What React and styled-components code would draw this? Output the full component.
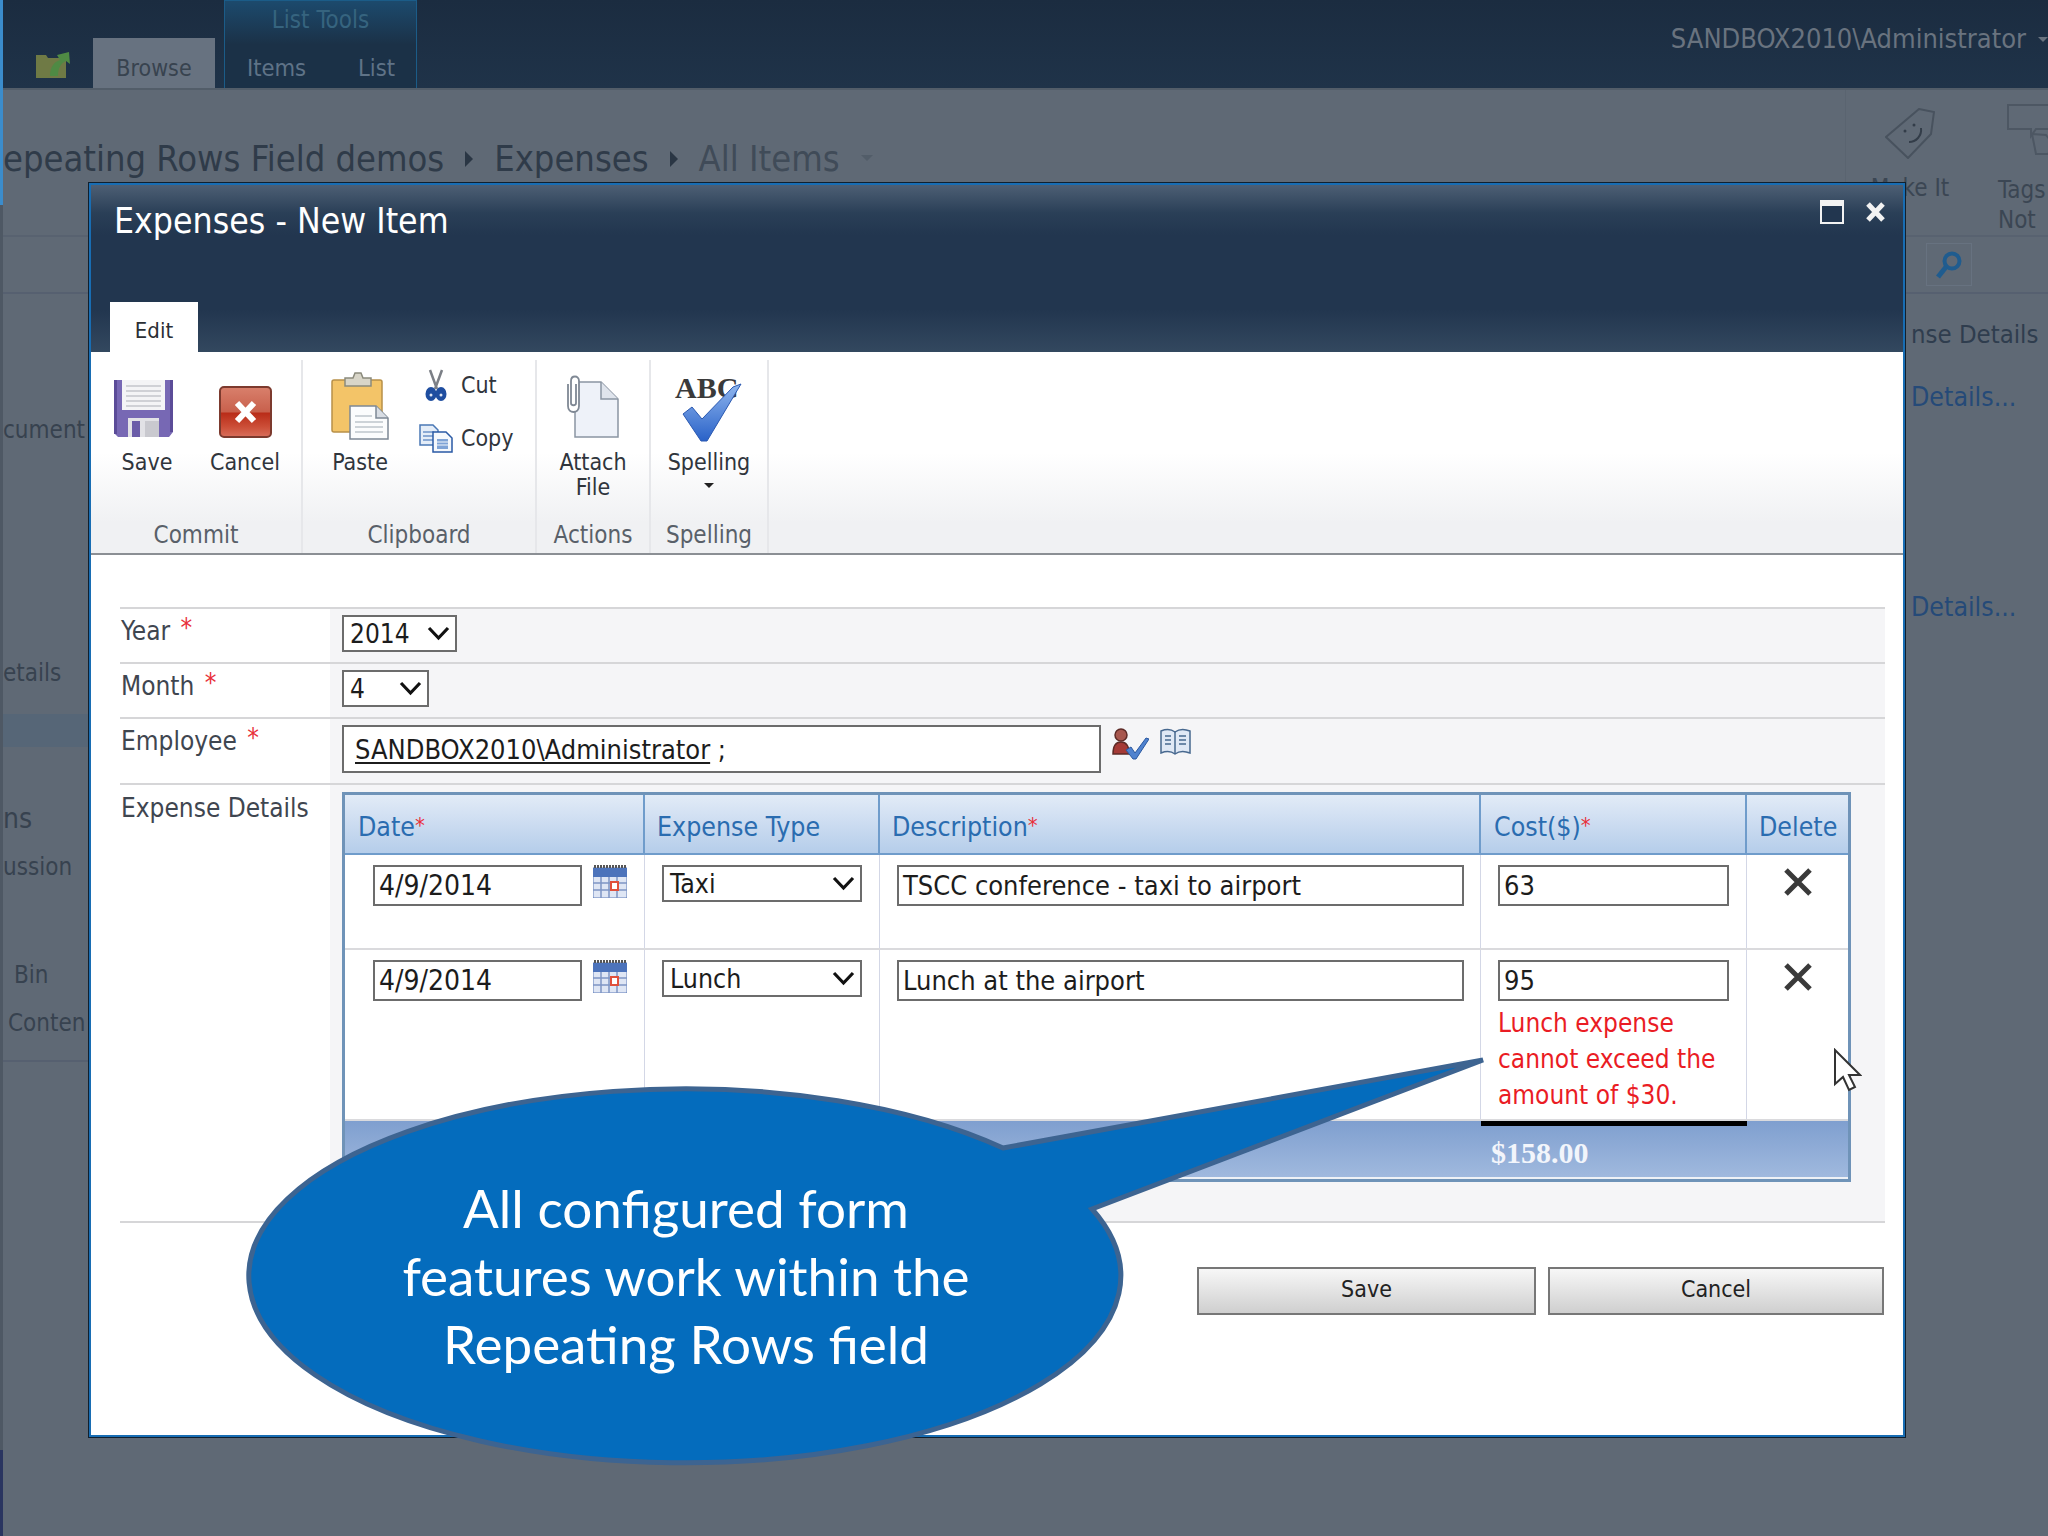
import React from 'react';
import styled, { createGlobalStyle } from 'styled-components';

const uiFont = '"DejaVu Sans Condensed", "DejaVu Sans", sans-serif';

const GlobalStyle = createGlobalStyle`
  html, body { margin: 0; padding: 0; background: #5f6975; }
  * { box-sizing: border-box; }
`;

const Page = styled.div`
  position: relative;
  display: flex;
  width: 2048px;
  height: 1536px;
  overflow: hidden;
  background: #5f6975;
  font-family: ${uiFont};
  font-size: 23px;
`;

const EdgeStrip = styled.div`
  flex: 0 0 3px;
  background: linear-gradient(#3b8ccb 0 205px, #4e5864 205px 1450px, #2a3560 1450px);
`;

const Backdrop = styled.div`
  flex: 1;
  min-width: 0;
  display: flex;
  flex-direction: column;
  overflow: hidden;
  color: #3a4552;
`;

const TopBar = styled.div`
  flex: 0 0 88px;
  display: flex;
  align-items: flex-end;
  padding-left: 33px;
  background: linear-gradient(#1b2c40, #1f3349);
  border-bottom: 2px solid #525d69;
`;

const FolderSlot = styled.div`
  width: 57px;
  align-self: flex-end;
  padding-bottom: 5px;
`;

const BrowseTab = styled.div`
  width: 122px;
  height: 50px;
  background: #677280;
  color: #38434f;
  text-align: center;
  line-height: 60px;
  font-size: 23px;
`;

const ContextGroup = styled.div`
  width: 193px;
  height: 88px;
  margin-left: 9px;
  border: 1px solid #1b5c88;
  border-bottom: 0;
  background: linear-gradient(#1c4a6d, #1b3147 50%);
  text-align: center;
`;

const ContextTitle = styled.div`
  height: 38px;
  line-height: 38px;
  font-size: 24px;
  color: #36647f;
`;

const ContextTabs = styled.div`
  display: flex;
  justify-content: space-between;
  padding: 0 21px 0 22px;
  line-height: 58px;
  font-size: 23.5px;
  color: #5f7387;
`;

const UserName = styled.div`
  margin-left: auto;
  align-self: flex-start;
  display: flex;
  align-items: center;
  gap: 12px;
  margin-top: 24px;
  font-size: 27px;
  line-height: 30px;
  color: #69737f;
  white-space: nowrap;
`;

const TinyCaret = styled.span`
  display: block;
  width: 0;
  height: 0;
  border-left: ${(p) => p.$size}px solid transparent;
  border-right: ${(p) => p.$size}px solid transparent;
  border-top: ${(p) => p.$size}px solid ${(p) => p.$color};
`;

const TitleStrip = styled.div`
  flex: 0 0 147px;
  display: flex;
  border-bottom: 2px solid #586270;
`;

const Breadcrumb = styled.div`
  display: flex;
  align-items: center;
  gap: 21px;
  height: 44px;
  margin-top: 46px;
  font-size: 36px;
  color: #2f3b49;
  white-space: nowrap;
`;

const CrumbArrow = styled.span`
  display: block;
  width: 0;
  height: 0;
  margin-top: 2px;
  border-top: 8px solid transparent;
  border-bottom: 8px solid transparent;
  border-left: 8px solid #2a3644;
`;

const CrumbLast = styled.span`
  color: #404b58;
`;

const SocialGroup = styled.div`
  margin-left: auto;
  width: 203px;
  height: 145px;
  overflow: hidden;
  border-left: 1px solid #5a6470;
  display: flex;
  gap: 24px;
  font-size: 24px;
  line-height: 30px;
  color: #3b4653;
`;

const SocialItem = styled.div`
  width: 128px;
  flex: none;
  display: flex;
  flex-direction: column;
  align-items: ${(p) => (p.$alignStart ? 'flex-start' : 'center')};
  padding-top: ${(p) => p.$top}px;
  white-space: nowrap;
`;

const SocialCaption = styled.span`
  margin-top: ${(p) => p.$top || 0}px;
`;

const NoteSlot = styled.div`
  display: flex;
  margin-left: 8px;
`;

const SearchStrip = styled.div`
  flex: 0 0 57px;
  display: flex;
  justify-content: flex-end;
  padding: 6px 76px 0 0;
  border-bottom: 2px solid #566070;
`;

const SearchButton = styled.div`
  width: 46px;
  height: 43px;
  display: flex;
  align-items: center;
  justify-content: center;
  border: 1px solid #677280;
`;

const SideColumns = styled.div`
  flex: 1;
  display: flex;
  justify-content: space-between;
  min-height: 0;
`;

const LeftColumn = styled.div`
  width: 85px;
  overflow: hidden;
  white-space: nowrap;
`;

const SideText = styled.div`
  margin-top: ${(p) => p.$top}px;
  padding-left: ${(p) => p.$left || 0}px;
  line-height: 28px;
  font-size: ${(p) => p.$size || 24}px;
  color: #37424f;
`;

const SideBand = styled.div`
  height: 33px;
  margin-top: 27px;
  background: #566677;
`;

const SideRule = styled.div`
  height: 2px;
  margin-top: 23px;
  background: #566070;
`;

const RightColumn = styled.div`
  width: 142px;
  padding-left: 5px;
  white-space: nowrap;
`;

const RightHeading = styled.div`
  margin-top: 25px;
  line-height: 30px;
  font-size: 25.5px;
  color: #2f3d4e;
`;

const DetailsLink = styled.div`
  margin-top: ${(p) => p.$top}px;
  line-height: 30px;
  font-size: 26.5px;
  color: #254a78;
`;

const Dialog = styled.div`
  position: absolute;
  left: 88px;
  top: 182px;
  width: 1818px;
  height: 1256px;
  display: flex;
  flex-direction: column;
  background: #fff;
  border: 3px solid #186db3;
  outline: 1px solid #10202f;
  outline-offset: -1px;
`;

const DialogHeader = styled.div`
  flex: 0 0 167px;
  display: flex;
  flex-direction: column;
  justify-content: space-between;
  background: linear-gradient(#4d5f74, #2a3f57 28px, #22364f 50px, #22364f 125px, #33485f);
`;

const TitleRow = styled.div`
  display: flex;
  align-items: flex-start;
  padding: 18px 17px 0 23px;
`;

const DialogTitle = styled.div`
  flex: 1;
  line-height: 36px;
  font-size: 35.3px;
  color: #fff;
`;

const RestoreIcon = styled.div`
  width: 24px;
  height: 24px;
  margin-top: -3px;
  border: 2px solid #f2f2f2;
  border-top-width: 6px;
  background: #22364f;
`;

const CloseIcon = styled.svg`
  width: 21px;
  height: 20px;
  margin: -1px 0 0 21px;
`;

const EditTab = styled.div`
  width: 88px;
  height: 50px;
  margin-left: 19px;
  background: #fff;
  color: #2b2f35;
  text-align: center;
  line-height: 58px;
  font-size: 22px;
`;

const Ribbon = styled.div`
  flex: 0 0 203px;
  display: flex;
  background: linear-gradient(#fff, #fff 50%, #f0f1f3 85%);
  border-bottom: 2px solid #8b8f94;
`;

const RibbonGroup = styled.div`
  flex: 0 0 ${(p) => p.$width}px;
  display: flex;
  flex-direction: column;
  margin-top: 8px;
  border-right: 2px solid #e6e7ea;
`;

const GroupBody = styled.div`
  flex: 1;
  display: flex;
  justify-content: ${(p) => (p.$center ? 'center' : 'flex-start')};
  gap: ${(p) => p.$gap || 0}px;
  padding: 6px 0 0 ${(p) => p.$left || 0}px;
`;

const GroupLabel = styled.div`
  height: 33px;
  text-align: center;
  line-height: 30px;
  font-size: 24px;
  color: #596069;
`;

const BigButton = styled.div`
  width: ${(p) => p.$width || 80}px;
  display: flex;
  flex-direction: column;
  align-items: center;
  text-align: center;
  line-height: 25px;
  color: #30353c;
`;

const IconSlot = styled.div`
  height: ${(p) => 72 + (p.$low || 0)}px;
  margin: 0 ${(p) => p.$shift || 0}px ${(p) => 12 - (p.$low || 0)}px 0;
  display: flex;
  align-items: flex-end;
  justify-content: center;
`;

const SmallColumn = styled.div`
  display: flex;
  flex-direction: column;
  gap: 15px;
  color: #30353c;
`;

const SmallButton = styled.div`
  display: flex;
  align-items: center;
  gap: 7px;
  height: 38px;
`;

const SmallIcon = styled.div`
  width: 36px;
  display: flex;
  justify-content: center;
`;

const MenuCaret = styled(TinyCaret)`
  margin-top: 8px;
`;

const FormBody = styled.div`
  flex: 1;
  display: flex;
  flex-direction: column;
  padding: 52px 18px 0 29px;
`;

const FormRow = styled.div`
  display: grid;
  grid-template-columns: 210px 1fr;
  height: ${(p) => p.$height}px;
  border-top: 2px solid #d6d6d8;
`;

const FieldLabel = styled.div`
  padding: ${(p) => p.$top || 8}px 0 0 1px;
  line-height: 28px;
  font-size: 26px;
  color: #3f4650;
`;

const Required = styled.span`
  position: relative;
  top: -3px;
  margin-left: 3px;
  color: #e8303a;
`;

const HeaderRequired = styled.span`
  position: relative;
  top: -3px;
  font-size: 22px;
  color: #e8303a;
`;

const FieldValue = styled.div`
  display: flex;
  align-items: flex-start;
  padding: ${(p) => p.$top}px 0 0 12px;
  background: #f5f5f7;
`;

const FieldBox = styled.div`
  display: flex;
  align-items: center;
  justify-content: space-between;
  width: ${(p) => p.$width}px;
  height: ${(p) => p.$height}px;
  padding: 0 ${(p) => p.$right || 5}px 0 ${(p) => p.$left || 4}px;
  background: #fff;
  border: 2px solid #6c6c6c;
  font-size: ${(p) => p.$font || 27}px;
  color: #1c1c1c;
  white-space: nowrap;
`;

const PickerName = styled.span`
  text-decoration: underline;
  text-underline-offset: 3px;
`;

const PickerIcons = styled.div`
  display: flex;
  gap: 10px;
  margin: 3px 0 0 11px;
`;

const RepeatTable = styled.div`
  width: 1509px;
  border: 3px solid #6f93b8;
  background: #fff;
  font-size: 26.5px;
`;

const TableRow = styled.div`
  display: grid;
  grid-template-columns: 300px 235px 601px 266px 101px;
  height: ${(p) => p.$height}px;
  border-bottom: 2px solid #dadadd;
`;

const HeaderRow = styled(TableRow)`
  background: linear-gradient(#e2ebf7, #b5cdea);
  border-bottom: 2px solid #6f9ccb;
`;

const HeaderCell = styled.div`
  padding: 18px 0 0 ${(p) => p.$left || 10}px;
  line-height: 28px;
  color: #2a6cb0;
  border-right: 2px solid #6f9ccb;
  white-space: nowrap;

  &:last-child { border-right: 0; }
`;

const BodyCell = styled.div`
  display: flex;
  align-items: flex-start;
  flex-direction: ${(p) => (p.$stack ? 'column' : 'row')};
  justify-content: ${(p) => (p.$center ? 'center' : 'flex-start')};
  padding: ${(p) => p.$top || 10}px 0 0 ${(p) => p.$left || 0}px;
  border-right: 1px solid #d3d7e6;

  &:last-child { border-right: 0; }
`;

const CalendarSlot = styled.div`
  margin-left: 11px;
`;

const ErrorText = styled.div`
  margin-top: 4px;
  width: 240px;
  line-height: 36px;
  font-size: 26px;
  color: #ea1c24;
`;

const FooterRow = styled.div`
  display: grid;
  grid-template-columns: 1136px 266px 101px;
  height: 58px;
  background: linear-gradient(#7f9fcf, #a0b9de);
  border-bottom: 2px solid #eef1f6;
`;

const TotalCell = styled.div`
  padding-left: 10px;
  border-top: 5px solid #000;
  font-family: "Liberation Serif", serif;
  font-weight: bold;
  font-size: 30px;
  line-height: 54px;
  color: #f2f5fb;
`;

const FormFooter = styled.div`
  display: flex;
  justify-content: flex-end;
  gap: 12px;
  padding: 44px 1px 0 0;
  border-top: 2px solid #d6d6d8;
`;

const FormButton = styled.div`
  width: ${(p) => p.$width}px;
  height: 48px;
  border: 2px solid #777;
  background: linear-gradient(#f7f7f7, #cfcfcf);
  text-align: center;
  line-height: 40px;
  font-size: 23px;
  color: #222;
`;

const BubbleShape = styled.svg`
  position: absolute;
  left: 240px;
  top: 1050px;
  width: 1260px;
  height: 420px;
`;

const BubbleText = styled.div`
  position: absolute;
  left: 249px;
  top: 1174px;
  width: 874px;
  text-align: center;
  font-family: Lato, sans-serif;
  font-size: 53px;
  line-height: 68px;
  color: #fff;
`;

const Cursor = styled.svg`
  position: absolute;
  left: 1832px;
  top: 1048px;
  width: 30px;
  height: 45px;
`;

const SaveIcon = () => (
  <svg width="59" height="58" viewBox="0 0 59 58">
    <path d="M0 0h59v52l-4 5H4l-4-4z" fill="#7768b4" />
    <path d="M0 0h3v54H0zM56 0h3v52h-3z" fill="#5b4c98" />
    <rect x="8" y="0" width="43" height="30" fill="#f4f4f6" />
    <path d="M12 6h35M12 11h35M12 16h35M12 21h35M12 26h35" stroke="#c3c5cc" strokeWidth="1.5" />
    <rect x="14" y="38" width="31" height="19" fill="#e2e2e6" />
    <rect x="18" y="41" width="8" height="16" fill="#6a5ca8" />
    <rect x="31" y="41" width="14" height="16" fill="#c9c9cf" />
  </svg>
);

const CancelIcon = () => (
  <svg width="53" height="52" viewBox="0 0 53 52">
    <defs>
      <linearGradient id="cancelFill" x1="0" y1="0" x2="0" y2="1">
        <stop offset="0" stopColor="#d9806c" />
        <stop offset="0.5" stopColor="#c8604c" />
        <stop offset="0.52" stopColor="#b92c18" />
        <stop offset="0.8" stopColor="#cc4f38" />
        <stop offset="1" stopColor="#d96f5c" />
      </linearGradient>
    </defs>
    <rect x="1" y="1" width="51" height="50" rx="4" fill="url(#cancelFill)" stroke="#7c3a2e" strokeWidth="2" />
    <path d="M18 17l17 18M35 17L18 35" stroke="#fff" strokeWidth="6" />
  </svg>
);

const PasteIcon = () => (
  <svg width="58" height="68" viewBox="0 0 58 68">
    <rect x="1" y="8" width="50" height="52" rx="2" fill="#f3c468" stroke="#b89048" strokeWidth="1.5" />
    <path d="M14 6h8l2-5h6l2 5h8v8H14z" fill="#d8d5c8" stroke="#8a8a7c" strokeWidth="1.5" />
    <path d="M19 34h26l12 12v21H19z" fill="#fbfcfd" stroke="#7d8895" strokeWidth="1.5" />
    <path d="M45 34v12h12" fill="#d8dde4" stroke="#7d8895" strokeWidth="1.5" />
    <path d="M24 44h17M24 50h28M24 55h28M24 60h28" stroke="#bfc5cc" strokeWidth="1.5" />
  </svg>
);

const CutIcon = () => (
  <svg width="22" height="32" viewBox="0 0 22 32">
    <path d="M5 1l7 19M17 1l-7 19" stroke="#7b7f86" strokeWidth="2.5" />
    <ellipse cx="6" cy="25" rx="4" ry="5.5" fill="#1f4ea0" stroke="#1f4ea0" strokeWidth="3" />
    <ellipse cx="16" cy="25" rx="4" ry="5.5" fill="#1f4ea0" stroke="#1f4ea0" strokeWidth="3" />
    <circle cx="6" cy="26" r="1.5" fill="#dfe6f2" />
    <circle cx="16" cy="26" r="1.5" fill="#dfe6f2" />
  </svg>
);

const CopyIcon = () => (
  <svg width="34" height="29" viewBox="0 0 34 29">
    <path d="M1 1h13l5 5v15H1z" fill="#e4edf8" stroke="#4a78b5" strokeWidth="1.5" />
    <path d="M4 8h11M4 12h11M4 16h11" stroke="#6c93c8" strokeWidth="1.5" />
    <path d="M14 8h13l6 6v14H14z" fill="#f5f8fc" stroke="#2a5aa5" strokeWidth="1.5" />
    <path d="M18 15h11v10H18z" fill="#7fa3d6" />
    <path d="M18 18h11M18 21h11" stroke="#f5f8fc" strokeWidth="1" />
  </svg>
);

const AttachIcon = () => (
  <svg width="56" height="64" viewBox="0 0 56 64">
    <path d="M12 8h26l17 17v38H12z" fill="#eef2f9" stroke="#8b95a3" strokeWidth="1.5" />
    <path d="M38 8v17h17" fill="#dfe4ec" stroke="#8b95a3" strokeWidth="1.5" />
    <path d="M5 10v22c0 8 11 8 11 0V7C16 1 8 1 8 7v22c0 3 5 3 5 0V10" fill="#fff" stroke="#7f8894" strokeWidth="1.8" />
  </svg>
);

const SpellingIcon = () => (
  <svg width="72" height="74" viewBox="0 0 72 74">
    <defs>
      <linearGradient id="checkFill" x1="0" y1="0" x2="0" y2="1">
        <stop offset="0" stopColor="#8fb6ee" />
        <stop offset="1" stopColor="#2a62c8" />
      </linearGradient>
    </defs>
    <text x="2" y="30" fontFamily="Liberation Serif, serif" fontWeight="bold" fontSize="30" fill="#3a3a3a">ABC</text>
    <path d="M10 46l9-7 10 12L60 19l8-3-34 57h-6z" fill="url(#checkFill)" stroke="#2a58b0" strokeWidth="1" />
  </svg>
);

const Chevron = () => (
  <svg width="23" height="15" viewBox="0 0 23 15">
    <path d="M2 2l9.5 10L21 2" fill="none" stroke="#111" strokeWidth="3.2" />
  </svg>
);

const CalendarIcon = () => (
  <svg width="34" height="33" viewBox="0 0 34 33">
    <rect x="0" y="3" width="34" height="30" fill="#dfe6f4" stroke="#5d7bb8" />
    <rect x="0" y="3" width="34" height="9" fill="#4c73bb" />
    <path d="M1 1.5h32" stroke="#555" strokeWidth="3" strokeDasharray="2 1" />
    <path d="M0 18h34M0 25h34M8 12v21M16 12v21M24 12v21" stroke="#7f95c4" strokeWidth="1.5" />
    <rect x="18" y="17" width="7" height="8" fill="#fff" stroke="#e0503c" strokeWidth="2" />
  </svg>
);

const PersonCheckIcon = () => (
  <svg width="37" height="32" viewBox="0 0 37 32">
    <circle cx="9" cy="7" r="6" fill="#a8574e" stroke="#5e2b27" strokeWidth="1.5" />
    <path d="M1 26c0-9 3-12 8-12s8 3 8 12z" fill="#a53a36" stroke="#5e2b27" strokeWidth="1.5" />
    <path d="M14 22l5-3 4 6 11-15 3 1-13 20h-3z" fill="#4f82cf" stroke="#2a58a0" />
  </svg>
);

const BookIcon = () => (
  <svg width="33" height="28" viewBox="0 0 33 28">
    <path d="M2 3c5-2 10-2 14 1 4-3 10-3 15-1v22c-5-2-11-2-15 1-4-3-9-3-14-1z" fill="#dfe8f5" stroke="#47688f" strokeWidth="1.5" />
    <path d="M16 4v22M6 8h6M6 12h6M6 16h6M20 8h7M20 12h7M20 16h7" stroke="#47688f" strokeWidth="1.5" />
  </svg>
);

const DeleteIcon = () => (
  <svg width="30" height="28" viewBox="0 0 30 28">
    <path d="M3 2l24 24M27 2L3 26" stroke="#3a3a3a" strokeWidth="5" />
  </svg>
);

const FolderIcon = () => (
  <svg width="36" height="30" viewBox="0 0 36 30">
    <path d="M0 7h10l2 3h18v20H0z" fill="#6f7a45" />
    <path d="M14 28c0-9 4-14 10-16l-3-5 12-3 1 12-4-3c-5 2-8 7-8 15z" fill="#4f8a44" />
  </svg>
);

const TagIcon = () => (
  <svg width="50" height="51" viewBox="0 0 50 51">
    <path d="M34 1l15 3-3 22-23 24L1 29z" fill="none" stroke="#48525e" strokeWidth="2" />
    <circle cx="20" cy="23" r="1.5" fill="#333d49" />
    <circle cx="29" cy="17" r="1.5" fill="#333d49" />
    <path d="M36 20c1 8-5 14-12 14" fill="none" stroke="#333d49" strokeWidth="2" />
  </svg>
);

const NoteIcon = () => (
  <svg width="50" height="51" viewBox="0 0 50 51">
    <path d="M2 1h46v24H30l-5 7v-7H2z" fill="none" stroke="#4d5763" strokeWidth="2" />
    <path d="M26 30l14 1 8 10-6 9H30z" fill="none" stroke="#4d5763" strokeWidth="2" />
  </svg>
);

const MagnifierIcon = () => (
  <svg width="28" height="28" viewBox="0 0 28 28">
    <circle cx="17" cy="10" r="7.5" fill="none" stroke="#1f5c8f" strokeWidth="4" />
    <path d="M11 16L3 26" stroke="#1f5c8f" strokeWidth="5" />
  </svg>
);

const expenses = [
  { date: '4/9/2014', type: 'Taxi', description: 'TSCC conference - taxi to airport', cost: '63', height: 95 },
  { date: '4/9/2014', type: 'Lunch', description: 'Lunch at the airport', cost: '95', height: 171, error: true },
];

function ExpenseRow({ row }) {
  return (
    <TableRow $height={row.height}>
      <BodyCell $left={28}>
        <FieldBox $width={209} $height={41} $font={28}>{row.date}</FieldBox>
        <CalendarSlot><CalendarIcon /></CalendarSlot>
      </BodyCell>
      <BodyCell $left={17}>
        <FieldBox $width={200} $height={37} $left={6} $font={26.5}>{row.type}<Chevron /></FieldBox>
      </BodyCell>
      <BodyCell $left={17}>
        <FieldBox $width={567} $height={41}>{row.description}</FieldBox>
      </BodyCell>
      <BodyCell $left={17} $stack>
        <FieldBox $width={231} $height={41}>{row.cost}</FieldBox>
        {row.error && <ErrorText>Lunch expense cannot exceed the amount of $30.</ErrorText>}
      </BodyCell>
      <BodyCell $center $top={13}><DeleteIcon /></BodyCell>
    </TableRow>
  );
}

export default function App() {
  return (
    <>
      <GlobalStyle />
      <Page>
        <EdgeStrip />
        <Backdrop>
          <TopBar>
            <FolderSlot><FolderIcon /></FolderSlot>
            <BrowseTab>Browse</BrowseTab>
            <ContextGroup>
              <ContextTitle>List Tools</ContextTitle>
              <ContextTabs><span>Items</span><span>List</span></ContextTabs>
            </ContextGroup>
            <UserName>SANDBOX2010\Administrator <TinyCaret $size={5} $color="#69737f" /></UserName>
          </TopBar>
          <TitleStrip>
            <Breadcrumb>
              <span>epeating Rows Field demos</span>
              <CrumbArrow />
              <span>Expenses</span>
              <CrumbArrow />
              <CrumbLast>All Items</CrumbLast>
              <TinyCaret $size={6} $color="#525d69" />
            </Breadcrumb>
            <SocialGroup>
              <SocialItem $top={18}>
                <TagIcon />
                <SocialCaption $top={14}>Make It</SocialCaption>
              </SocialItem>
              <SocialItem $top={14} $alignStart>
                <NoteSlot><NoteIcon /></NoteSlot>
                <SocialCaption $top={20}>Tags</SocialCaption>
                <SocialCaption>Not</SocialCaption>
              </SocialItem>
            </SocialGroup>
          </TitleStrip>
          <SearchStrip>
            <SearchButton><MagnifierIcon /></SearchButton>
          </SearchStrip>
          <SideColumns>
            <LeftColumn>
              <SideText $top={122}>cument</SideText>
              <SideText $top={215}>etails</SideText>
              <SideBand />
              <SideText $top={58} $size={28}>ns</SideText>
              <SideText $top={20}>ussion</SideText>
              <SideText $top={80} $left={11}>Bin</SideText>
              <SideText $top={20} $left={5}>Conten</SideText>
              <SideRule />
            </LeftColumn>
            <RightColumn>
              <RightHeading>nse Details</RightHeading>
              <DetailsLink $top={33}>Details...</DetailsLink>
              <DetailsLink $top={180}>Details...</DetailsLink>
            </RightColumn>
          </SideColumns>
        </Backdrop>

        <Dialog>
          <DialogHeader>
            <TitleRow>
              <DialogTitle>Expenses - New Item</DialogTitle>
              <RestoreIcon />
              <CloseIcon viewBox="0 0 21 20">
                <path d="M3 2l15 16M18 2L3 18" stroke="#f2f2f2" strokeWidth="5" />
              </CloseIcon>
            </TitleRow>
            <EditTab>Edit</EditTab>
          </DialogHeader>

          <Ribbon>
            <RibbonGroup $width={212}>
              <GroupBody $left={16} $gap={18}>
                <BigButton><IconSlot $shift={7}><SaveIcon /></IconSlot>Save</BigButton>
                <BigButton><IconSlot><CancelIcon /></IconSlot>Cancel</BigButton>
              </GroupBody>
              <GroupLabel>Commit</GroupLabel>
            </RibbonGroup>
            <RibbonGroup $width={234}>
              <GroupBody $left={17} $gap={18}>
                <BigButton><IconSlot $low={2}><PasteIcon /></IconSlot>Paste</BigButton>
                <SmallColumn>
                  <SmallButton><SmallIcon><CutIcon /></SmallIcon>Cut</SmallButton>
                  <SmallButton><SmallIcon><CopyIcon /></SmallIcon>Copy</SmallButton>
                </SmallColumn>
              </GroupBody>
              <GroupLabel>Clipboard</GroupLabel>
            </RibbonGroup>
            <RibbonGroup $width={114}>
              <GroupBody $center>
                <BigButton><IconSlot $shift={4}><AttachIcon /></IconSlot>Attach<br />File</BigButton>
              </GroupBody>
              <GroupLabel>Actions</GroupLabel>
            </RibbonGroup>
            <RibbonGroup $width={118}>
              <GroupBody $center>
                <BigButton $width={100}>
                  <IconSlot $low={4}><SpellingIcon /></IconSlot>
                  Spelling
                  <MenuCaret $size={5} $color="#222" />
                </BigButton>
              </GroupBody>
              <GroupLabel>Spelling</GroupLabel>
            </RibbonGroup>
          </Ribbon>

          <FormBody>
            <FormRow $height={55}>
              <FieldLabel>Year <Required>*</Required></FieldLabel>
              <FieldValue $top={6}>
                <FieldBox $width={115} $height={37} $font={26} $left={6}>2014<Chevron /></FieldBox>
              </FieldValue>
            </FormRow>
            <FormRow $height={55}>
              <FieldLabel>Month <Required>*</Required></FieldLabel>
              <FieldValue $top={6}>
                <FieldBox $width={87} $height={37} $font={26} $left={6}>4<Chevron /></FieldBox>
              </FieldValue>
            </FormRow>
            <FormRow $height={66}>
              <FieldLabel>Employee <Required>*</Required></FieldLabel>
              <FieldValue $top={6}>
                <FieldBox $width={759} $height={48} $left={11}>
                  <span><PickerName>SANDBOX2010\Administrator</PickerName> ;</span>
                </FieldBox>
                <PickerIcons><PersonCheckIcon /><BookIcon /></PickerIcons>
              </FieldValue>
            </FormRow>
            <FormRow $height={438}>
              <FieldLabel $top={9}>Expense Details</FieldLabel>
              <FieldValue $top={7}>
                <RepeatTable>
                  <HeaderRow $height={60}>
                    <HeaderCell $left={13}>Date<HeaderRequired>*</HeaderRequired></HeaderCell>
                    <HeaderCell $left={12}>Expense Type</HeaderCell>
                    <HeaderCell $left={12}>Description<HeaderRequired>*</HeaderRequired></HeaderCell>
                    <HeaderCell $left={13}>Cost($)<HeaderRequired>*</HeaderRequired></HeaderCell>
                    <HeaderCell $left={12}>Delete</HeaderCell>
                  </HeaderRow>
                  {expenses.map((row) => <ExpenseRow key={row.description} row={row} />)}
                  <FooterRow>
                    <div />
                    <TotalCell>$158.00</TotalCell>
                    <div />
                  </FooterRow>
                </RepeatTable>
              </FieldValue>
            </FormRow>
            <FormFooter>
              <FormButton $width={339}>Save</FormButton>
              <FormButton $width={336}>Cancel</FormButton>
            </FormFooter>
          </FormBody>
        </Dialog>

        <BubbleShape viewBox="240 1050 1260 420">
          <path
            d="M1003 1148 L1483 1060 L1092 1209 A436 187 0 1 1 1003 1148 Z"
            fill="#046cbd"
            stroke="#3d6491"
            strokeWidth="5"
            strokeLinejoin="miter"
          />
        </BubbleShape>
        <BubbleText>
          All configured form<br />
          features work within the<br />
          Repeating Rows field
        </BubbleText>

        <Cursor viewBox="0 0 30 45">
          <path d="M3 2v34l8-7 6 13 6-3-6-12h11z" fill="#fff" stroke="#333" strokeWidth="2" />
        </Cursor>
      </Page>
    </>
  );
}
